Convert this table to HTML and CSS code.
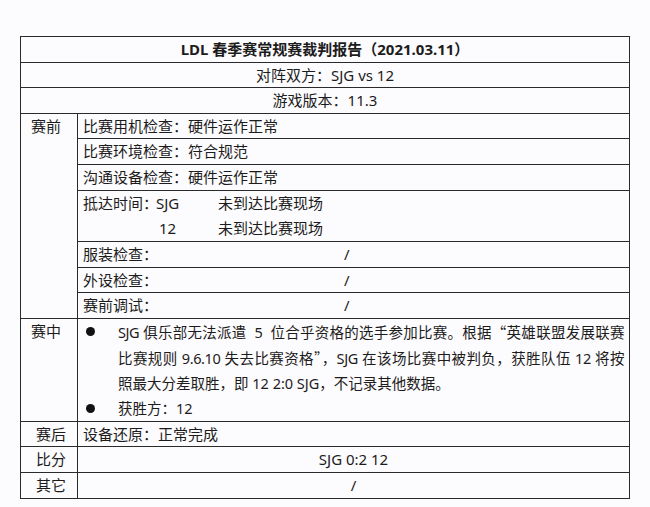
FILE: index.html
```html
<!DOCTYPE html>
<html lang="zh-CN">
<head>
<meta charset="utf-8">
<title>LDL 裁判报告</title>
<link rel="stylesheet" href="styles.css">
</head>
<body>
<table class="report">
  <colgroup><col class="c-head"><col class="c-body"></colgroup>
  <tr><td colspan="2" class="title">LDL 春季赛常规赛裁判报告（2021.03.11）</td></tr>
  <tr><td colspan="2" class="center">对阵双方：SJG vs 12</td></tr>
  <tr><td colspan="2" class="center">游戏版本：11.3</td></tr>
  <tr><td rowspan="7" class="head head-a">赛前</td><td class="cell">比赛用机检查：硬件运作正常</td></tr>
  <tr><td class="cell">比赛环境检查：符合规范</td></tr>
  <tr><td class="cell">沟通设备检查：硬件运作正常</td></tr>
  <tr><td class="cell arrive">
    <div class="arr-row"><span class="arr-label">抵达时间：</span><span class="arr-team">SJG</span><span class="arr-status">未到达比赛现场</span></div>
    <div class="arr-row"><span class="arr-label"></span><span class="arr-team arr-team-b">12</span><span class="arr-status">未到达比赛现场</span></div>
  </td></tr>
  <tr><td class="cell"><span class="lbl">服装检查：</span><span class="val">/</span></td></tr>
  <tr><td class="cell"><span class="lbl">外设检查：</span><span class="val">/</span></td></tr>
  <tr><td class="cell"><span class="lbl">赛前调试：</span><span class="val">/</span></td></tr>
  <tr><td class="head head-a">赛中</td><td class="cell mid">
    <div class="item">
      <span class="dot-box"><span class="dot"></span></span>
      <div class="item-text">
        <div class="ln just">SJG 俱乐部无法派遣&nbsp; 5&nbsp; 位合乎资格的选手参加比赛。根据<span class="q">“</span>英雄联盟发展联赛</div>
        <div class="ln just">比赛规则 9.6.10 失去比赛资格<span class="q">”</span>，SJG 在该场比赛中被判负，获胜队伍 12 将按</div>
        <div class="ln">照最大分差取胜，即 12 2:0 SJG，不记录其他数据。</div>
      </div>
    </div>
    <div class="item">
      <span class="dot-box"><span class="dot"></span></span>
      <div class="item-text"><div class="ln">获胜方：12</div></div>
    </div>
  </td></tr>
  <tr><td class="head head-b">赛后</td><td class="cell">设备还原：正常完成</td></tr>
  <tr><td class="head head-b">比分</td><td class="cell center">SJG 0:2 12</td></tr>
  <tr><td class="head head-b">其它</td><td class="cell center">/</td></tr>
</table>
</body>
</html>
```

FILE: styles.css
```css
html, body {
  margin: 0;
  padding: 0;
  background: #fcfbfd;
}
body {
  font-family: "Noto Sans", "Noto Sans CJK SC", sans-serif;
  font-size: 15px;
  color: #1c1c1c;
}
.report {
  border-collapse: collapse;
  width: 610px;
  margin: 36px 0 0 20px;
  table-layout: fixed;
}
.c-head { width: 57px; }
.report td {
  border: 1px solid #2a2a2a;
  padding: 0 5px;
  line-height: 24.6px;
  vertical-align: top;
  white-space: nowrap;
}
.report td.title {
  font-weight: 700;
  text-align: center;
}
.report td.center { text-align: center; }
.report td.head-a { padding-left: 10px; }
.report td.head-b { padding-left: 15px; }
.report td.arrive { line-height: 25.2px; }
.arr-row { display: flex; }
.arr-label { width: 73px; }
.arr-team { width: 62px; }
.arr-team-b { padding-left: 3px; width: 59px; }
.lbl { display: inline-block; width: 261px; }
.report td.mid { line-height: 25px; }
.item { display: flex; }
.dot-box {
  width: 35px;
  flex: none;
  display: flex;
  align-items: center;
  height: 25px;
}
.dot {
  display: block;
  width: 9px;
  height: 9px;
  border-radius: 50%;
  background: #111;
  margin-left: 3px;
}
.item-text { width: 508px; font-size: 14.5px; }
.q { font-family: "Noto Sans CJK SC", sans-serif; }
.ln { white-space: nowrap; }
.ln.just {
  white-space: normal;
  letter-spacing: -0.4px;
  text-align: justify;
  text-align-last: justify;
}
```
